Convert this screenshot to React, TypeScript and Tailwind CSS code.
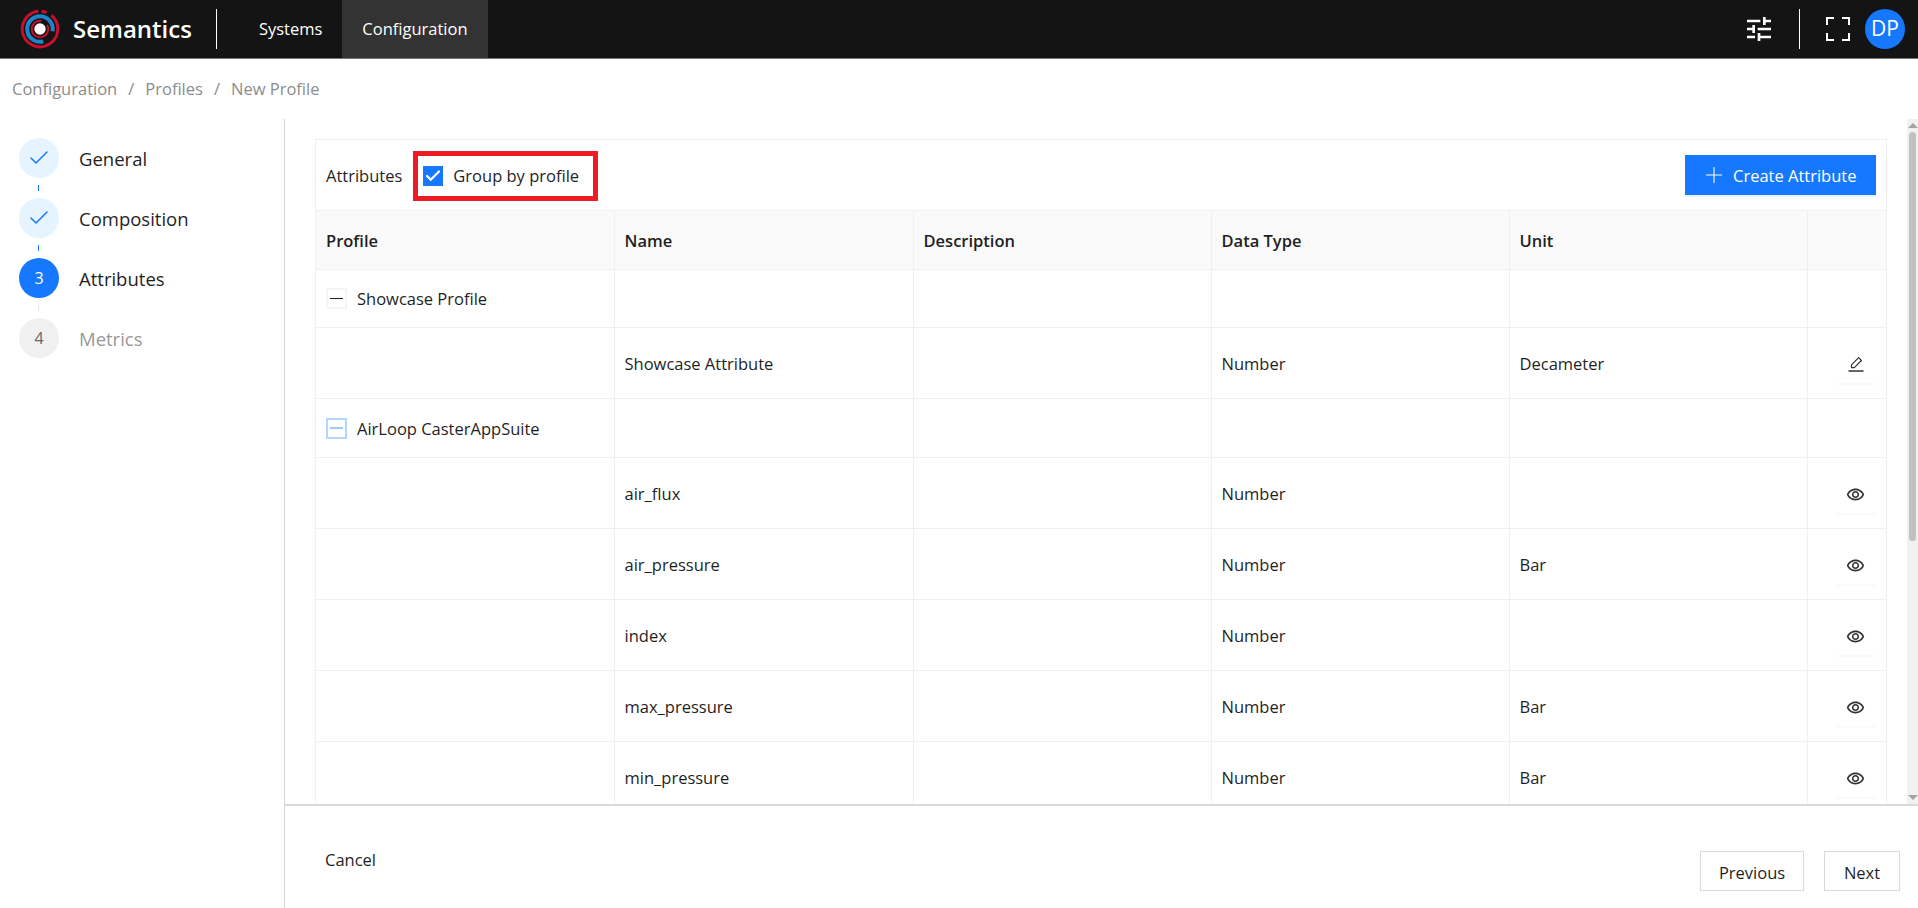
import { Check, Plus } from "lucide-react";

const font = "font-['Open_Sans','Noto_Sans',sans-serif]";

type Row =
  | { kind: "group"; name: string; active?: boolean }
  | { kind: "item"; name: string; type: string; unit?: string; action: "edit" | "view" };

const rows: Row[] = [
  { kind: "group", name: "Showcase Profile" },
  { kind: "item", name: "Showcase Attribute", type: "Number", unit: "Decameter", action: "edit" },
  { kind: "group", name: "AirLoop CasterAppSuite", active: true },
  { kind: "item", name: "air_flux", type: "Number", action: "view" },
  { kind: "item", name: "air_pressure", type: "Number", unit: "Bar", action: "view" },
  { kind: "item", name: "index", type: "Number", action: "view" },
  { kind: "item", name: "max_pressure", type: "Number", unit: "Bar", action: "view" },
  { kind: "item", name: "min_pressure", type: "Number", unit: "Bar", action: "view" },
];

const steps = [
  { label: "General", state: "done" },
  { label: "Composition", state: "done" },
  { label: "Attributes", state: "current", num: "3" },
  { label: "Metrics", state: "todo", num: "4" },
];

// clockwise arc around the logo centre, degrees from 12 o'clock
function arc(r: number, from: number, to: number) {
  const pt = (a: number) => {
    const t = ((a - 90) * Math.PI) / 180;
    return `${20 + r * Math.cos(t)} ${20 + r * Math.sin(t)}`;
  };
  const large = to - from > 180 ? 1 : 0;
  return `M${pt(from)} A${r} ${r} 0 ${large} 1 ${pt(to)}`;
}

function Logo() {
  return (
    <svg width="40" height="40" viewBox="0 0 40 40" fill="none">
      <path d={arc(17.8, 40, 355)} stroke="#c8102e" strokeWidth="3" />
      <path d={arc(17.8, 5, 22)} stroke="#c8102e" strokeWidth="3" />
      <path d={arc(12.8, 165, 460)} stroke="#1b87c9" strokeWidth="4" />
      <path d={arc(8.2, 60, 370)} stroke="#c8102e" strokeWidth="2" />
      <circle cx="20" cy="20" r="5.7" fill="#fff" />
    </svg>
  );
}

function TuneIcon() {
  return (
    <svg width="32" height="32" viewBox="0 0 24 24" fill="#fff">
      <path d="M3 17v2h6v-2H3zM3 5v2h10V5H3zm10 16v-2h8v-2h-8v-2h-2v6h2zM7 9v2H3v2h4v2h2V9H7zm14 4v-2H11v2h10zm-6-4h2V7h4V5h-4V3h-2v6z" />
    </svg>
  );
}

function FullscreenIcon() {
  return (
    <svg width="24" height="24" viewBox="0 0 24 24" fill="none" stroke="#fff" strokeWidth="2">
      <path d="M1 8V1h7M16 1h7v7M23 16v7h-7M8 23H1v-7" />
    </svg>
  );
}

function EyeIcon() {
  return (
    <svg width="19" height="19" viewBox="0 0 24 24" fill="#333">
      <path d="M12 6.5c3.79 0 7.17 2.13 8.82 5.5-1.65 3.37-5.02 5.5-8.82 5.5S4.83 15.37 3.18 12C4.83 8.63 8.21 6.5 12 6.5m0-2C7 4.5 2.73 7.61 1 12c1.73 4.39 6 7.5 11 7.5s9.27-3.11 11-7.5c-1.73-4.39-6-7.5-11-7.5zm0 5c1.38 0 2.5 1.12 2.5 2.5s-1.12 2.5-2.5 2.5-2.5-1.12-2.5-2.5 1.12-2.5 2.5-2.5m0-2c-2.48 0-4.5 2.02-4.5 4.5s2.02 4.5 4.5 4.5 4.5-2.02 4.5-4.5-2.02-4.5-4.5-4.5z" />
    </svg>
  );
}

function EditIcon() {
  return (
    <svg width="18" height="18" viewBox="0 0 18 18" fill="none" stroke="#333" strokeWidth="1.2">
      <path d="M4.5 12.6V9.8L11.6 2.7l2.8 2.8-7.1 7.1H4.5z" strokeLinejoin="round" />
      <path d="M1.5 16h15" strokeWidth="1.5" />
    </svg>
  );
}

function StepList() {
  return (
    <div className="w-[285px] shrink-0 border-r border-[#d4d4d4] pl-[19px] pt-[19px]">
      {steps.map((s, i) => (
        <div key={s.label}>
          <div className="flex items-center gap-5">
            {s.state === "done" && (
              <span className="w-10 h-10 rounded-full bg-[#e6f4ff] flex items-center justify-center text-[#1677ff]">
                <Check size={24} strokeWidth={1.5} />
              </span>
            )}
            {s.state === "current" && (
              <span className="w-10 h-10 rounded-full bg-[#1677ff] flex items-center justify-center text-white text-base">
                {s.num}
              </span>
            )}
            {s.state === "todo" && (
              <span className="w-10 h-10 rounded-full bg-[#f0f0f0] flex items-center justify-center text-[#666] text-base">
                {s.num}
              </span>
            )}
            <span className={`pt-[2px] text-[18.5px] ${s.state === "todo" ? "text-[#999]" : "text-[#1f1f1f]"}`}>{s.label}</span>
          </div>
          {i < steps.length - 1 && (
            <div className="h-5 flex items-center pl-[19px]">
              <div className={`w-px h-[6px] ${i < 2 ? "bg-[#1677ff]" : "bg-[#e5e5e5]"}`} />
            </div>
          )}
        </div>
      ))}
    </div>
  );
}

function AttributesTable() {
  return (
    <table className="w-full table-fixed border-collapse text-[16.5px] text-[#1f1f1f]">
      <colgroup>
        <col className="w-[298px]" />
        <col className="w-[299px]" />
        <col className="w-[298px]" />
        <col className="w-[298px]" />
        <col className="w-[298px]" />
        <col />
      </colgroup>
      <thead>
        <tr className="h-[59px] bg-[#fafafa] font-semibold text-left">
          <th className="border border-l-0 border-[#f0f0f0] px-[10px] pt-[2px] font-semibold">Profile</th>
          <th className="border border-[#f0f0f0] px-[10px] pt-[2px] font-semibold">Name</th>
          <th className="border border-[#f0f0f0] px-[10px] pt-[2px] font-semibold">Description</th>
          <th className="border border-[#f0f0f0] px-[10px] pt-[2px] font-semibold">Data Type</th>
          <th className="border border-[#f0f0f0] px-[10px] pt-[2px] font-semibold">Unit</th>
          <th className="border border-r-0 border-[#f0f0f0]"></th>
        </tr>
      </thead>
      <tbody>
        {rows.map((r) =>
          r.kind === "group" ? (
            <tr key={r.name} className={r.active ? "h-[59px]" : "h-[58px]"}>
              <td className="border border-l-0 border-[#f0f0f0] px-[10px]">
                <div className="flex items-center gap-[10px]">
                  <span
                    className={
                      r.active
                        ? "w-[21px] h-[21px] border-2 border-[#b3d6ff] flex items-center justify-center"
                        : "w-[21px] h-[21px] border-2 border-[#f5f5f5] flex items-center justify-center"
                    }
                  >
                    <span className={`w-[13px] h-[1.5px] ${r.active ? "bg-[#9cc8fb]" : "bg-[#1f1f1f]"}`} />
                  </span>
                  <span className="pt-[2px]">{r.name}</span>
                </div>
              </td>
              <td className="border border-[#f0f0f0]"></td>
              <td className="border border-[#f0f0f0]"></td>
              <td className="border border-[#f0f0f0]"></td>
              <td className="border border-[#f0f0f0]"></td>
              <td className="border border-r-0 border-[#f0f0f0]"></td>
            </tr>
          ) : (
            <tr key={r.name} className="h-[71px]">
              <td className="border border-l-0 border-[#f0f0f0]"></td>
              <td className="border border-[#f0f0f0] px-[10px] pt-[2px]">{r.name}</td>
              <td className="border border-[#f0f0f0]"></td>
              <td className="border border-[#f0f0f0] px-[10px] pt-[2px]">{r.type}</td>
              <td className="border border-[#f0f0f0] px-[10px] pt-[2px]">{r.unit}</td>
              <td className="border border-r-0 border-[#f0f0f0]">
                <button className="ml-[28px] pt-[2px] w-10 h-10 flex items-center justify-center shadow-[0_2px_0_rgba(0,0,0,0.02)]">
                  {r.action === "edit" ? <EditIcon /> : <EyeIcon />}
                </button>
              </td>
            </tr>
          )
        )}
      </tbody>
    </table>
  );
}

export default function App() {
  return (
    <div className={`${font} h-[908px] flex flex-col overflow-hidden bg-white text-[#1f1f1f] text-[16.5px]`}>
      <header className="h-[59px] shrink-0 bg-[#141414] border-b border-[#777] flex items-center text-white">
        <div className="pl-5 pr-[13px]">
          <Logo />
        </div>
        <span className="text-2xl font-semibold">Semantics</span>
        <div className="w-px h-10 bg-white ml-6 mr-[22px]" />
        <a className="h-full flex items-center px-5">Systems</a>
        <a className="h-full flex items-center px-5 bg-[#333]">Configuration</a>
        <div className="ml-auto flex items-center pr-[13px]">
          <TuneIcon />
          <div className="w-px h-10 bg-white ml-6 mr-[26px]" />
          <FullscreenIcon />
          <span className="ml-[15px] w-10 h-10 rounded-full bg-[#1677ff] flex items-center justify-center text-[21px]">DP</span>
        </div>
      </header>

      <nav className="h-[60px] shrink-0 flex items-center pl-3 gap-[11px] text-[#8c8c8c]">
        <span>Configuration</span>
        <span>/</span>
        <span>Profiles</span>
        <span>/</span>
        <span>New Profile</span>
      </nav>

      <div className="flex-1 flex min-h-0">
        <StepList />
        <div className="flex-1 min-w-0 flex flex-col">
          <div className="flex-1 min-h-0 flex border-b-2 border-[#d9d9d9]">
            <div className="flex-1 min-w-0 overflow-hidden pl-[30px] pr-5 pt-5">
              <div className="border border-[#f0f0f0]">
                <div className="h-[70px] flex items-center pl-[10px] pr-[10px]">
                  <span className="pt-[2px]">Attributes</span>
                  <label className="ml-[11px] mt-[2px] h-[50px] border-[5px] border-[#ed1c24] flex items-center pl-[5px] pr-[14px] gap-[10px]">
                    <span className="w-5 h-5 bg-[#1677ff] flex items-center justify-center text-white">
                      <Check size={18} strokeWidth={3} />
                    </span>
                    Group by profile
                  </label>
                  <button className="ml-auto w-[191px] h-10 pl-4 bg-[#1677ff] text-white flex items-center gap-[6px] shadow-[0_2px_0_rgba(5,145,255,0.1)]">
                    <Plus size={26} strokeWidth={1} />
                    <span className="pt-[2px]">Create Attribute</span>
                  </button>
                </div>
                <AttributesTable />
              </div>
            </div>
            {/* scrollbar */}
            <div className="w-[11px] shrink-0 bg-[#f1f1f1] flex flex-col items-center">
              <div className="mt-1 w-0 h-0 border-x-[5px] border-x-transparent border-b-[5px] border-b-[#a3a3a3]" />
              <div className="mt-1 w-[7px] h-[409px] rounded bg-[#c1c1c1]" />
              <div className="mt-auto mb-1 w-0 h-0 border-x-[5px] border-x-transparent border-t-[5px] border-t-[#a3a3a3]" />
            </div>
          </div>
          <div className="h-[102px] shrink-0 flex items-start pl-10 pr-[18px]">
            <button className="mt-[42px]">Cancel</button>
            <button className="ml-auto mt-[45px] pt-[4px] w-[104px] h-10 border border-[#d9d9d9]">Previous</button>
            <button className="ml-5 mt-[45px] pt-[4px] w-[76px] h-10 border border-[#d9d9d9]">Next</button>
          </div>
        </div>
      </div>
    </div>
  );
}
